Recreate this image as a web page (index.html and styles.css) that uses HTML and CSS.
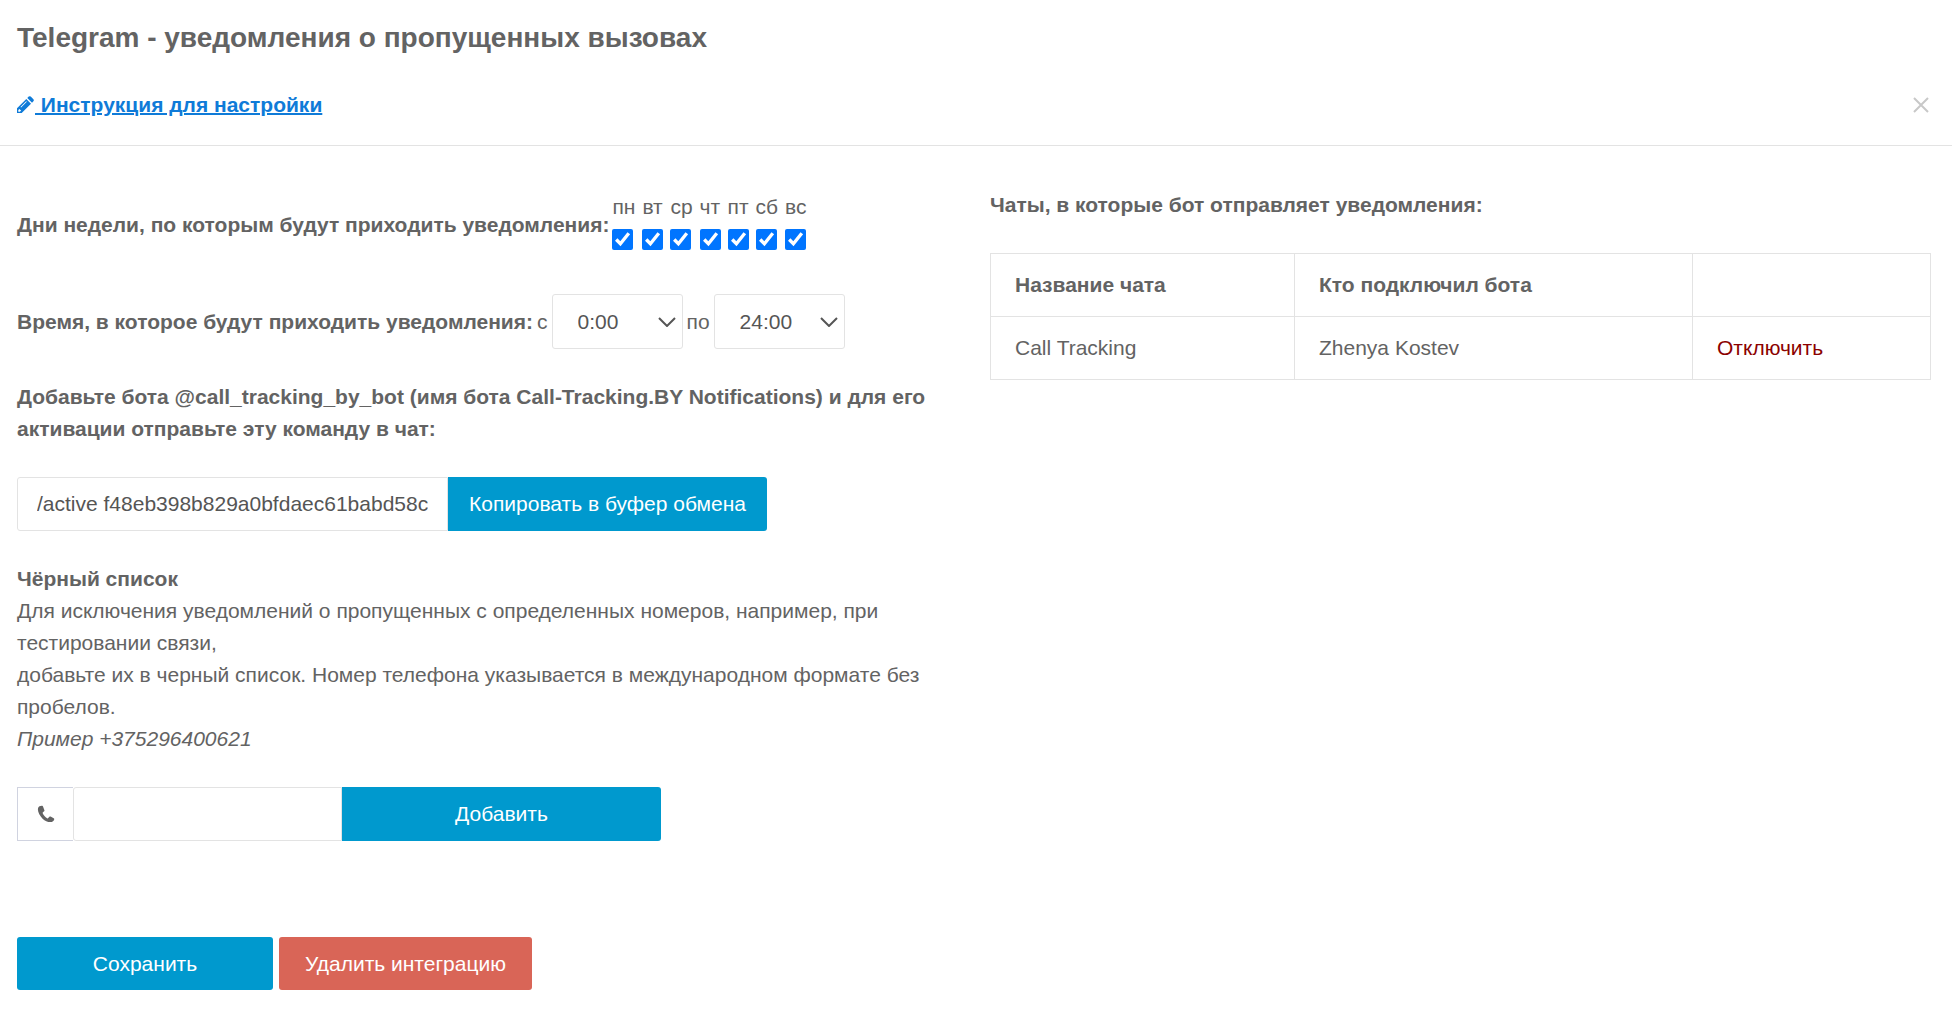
FILE: index.html
```html
<!DOCTYPE html>
<html lang="ru">
<head>
<meta charset="utf-8">
<meta name="viewport" content="width=device-width, initial-scale=1">
<title>Telegram - уведомления о пропущенных вызовах</title>
<link rel="stylesheet" href="styles.css">
</head>
<body>
<header class="header">
  <h1 class="title">Telegram - уведомления о пропущенных вызовах</h1>
  <div class="header-row">
    <a class="guide" href="#guide"><svg class="pencil" viewBox="0 0 18 18" aria-hidden="true"><path fill="currentColor" fill-rule="evenodd" d="M0 12.300 9.300 3l4.700 4.700L4.700 17H0zM1.300 14v1.700H3l1.100-1.100-1.700-1.700zM9.200 5.200 3.500 10.900l.6.6 5.700-5.700zM10.300 2l1.400-1.400q1-.9 2 0l2.700 2.700q.9 1 0 2L15 6.700z"/></svg><span class="guide-text">&nbsp;Инструкция для настройки</span></a>
    <button class="close" type="button" aria-label="Закрыть"><svg class="cross" viewBox="0 0 16 16" aria-hidden="true"><path d="M1 1l14 14M15 1 1 15" fill="none" stroke="currentColor" stroke-width="2"/></svg></button>
  </div>
</header>
<main class="columns">
  <form class="settings">
    <div class="days-row">
      <strong>Дни недели, по которым будут приходить уведомления:</strong>
      <div class="days">
        <label class="day">пн<input type="checkbox" checked></label>
        <label class="day">вт<input type="checkbox" checked></label>
        <label class="day">ср<input type="checkbox" checked></label>
        <label class="day">чт<input type="checkbox" checked></label>
        <label class="day">пт<input type="checkbox" checked></label>
        <label class="day">сб<input type="checkbox" checked></label>
        <label class="day">вс<input type="checkbox" checked></label>
      </div>
    </div>
    <div class="time-row">
      <strong>Время, в которое будут приходить уведомления:</strong>
      <label for="from">с</label>
      <span class="picker"><select id="from" class="select"><option>0:00</option></select><svg class="chevron" viewBox="0 0 18 10" aria-hidden="true"><path d="M1 1l8 8 8-8" fill="none" stroke="currentColor" stroke-width="2"/></svg></span>
      <label for="to">по</label>
      <span class="picker"><select id="to" class="select"><option>24:00</option></select><svg class="chevron" viewBox="0 0 18 10" aria-hidden="true"><path d="M1 1l8 8 8-8" fill="none" stroke="currentColor" stroke-width="2"/></svg></span>
    </div>
    <label class="command-label" for="command">Добавьте бота @call_tracking_by_bot (имя бота Call-Tracking.BY Notifications) и для его активации отправьте эту команду в чат:</label>
    <div class="group">
      <input class="field command" id="command" type="text" readonly value="/active f48eb398b829a0bfdaec61babd58c2">
      <button class="button attached" type="button">Копировать в буфер обмена</button>
    </div>
    <section class="blacklist">
      <label for="phone"><strong>Чёрный список</strong></label>
      <p class="text">Для исключения уведомлений о пропущенных с определенных номеров, например, при тестировании связи,<br>добавьте их в черный список. Номер телефона указывается в международном формате без пробелов.<br><em>Пример +375296400621</em></p>
    </section>
    <div class="group">
      <span class="addon"><svg class="phone" viewBox="0 0 18 18" aria-hidden="true"><path fill="currentColor" d="M3.500 1C2 1.300.9 2.300.9 4.600c0 3 2.200 6.700 4.700 9.100 2.400 2.300 5.300 3.500 7.900 3.400 2 0 3.400-1.100 3.700-2.600.1-.6 0-.9-.5-1.200l-3.100-1.700c-.5-.3-.9-.2-1.200.2l-1.200 1.300c-.3.300-.7.4-1.100.1-2-1.200-3.500-2.900-4.400-4.900-.2-.4-.1-.8.3-1.100l1.100-.9c.4-.3.500-.6.300-1.100L6.100 1.700C5.800 1 5.500.8 4.900.8z"/></svg></span>
      <input class="field number" id="phone" type="tel">
      <button class="button attached" type="button">Добавить</button>
    </div>
    <div class="actions">
      <button class="button save" type="submit">Сохранить</button>
      <button class="button danger" type="button">Удалить интеграцию</button>
    </div>
  </form>
  <section class="chats">
    <h2 class="subtitle">Чаты, в которые бот отправляет уведомления:</h2>
    <table class="table">
      <thead><tr><th class="col-chat">Название чата</th><th class="col-user">Кто подключил бота</th><th></th></tr></thead>
      <tbody><tr><td>Call Tracking</td><td>Zhenya Kostev</td><td><a class="disconnect" href="#disconnect">Отключить</a></td></tr></tbody>
    </table>
  </section>
</main>
</body>
</html>
```
FILE: styles.css
```css
* { box-sizing: border-box; }
body {
  margin: 0;
  background: #fff;
  color: #636363;
  font: 21px/32px "Helvetica Neue", "Liberation Sans", Arial, sans-serif;
}
button, input, select { margin: 0; font: inherit; }
.header { padding: 20px 18px 24px 17px; border-bottom: 1px solid #e3e3e3; }
.title { margin: 0 0 33px; font-size: 28px; line-height: 36px; }
.header-row { display: flex; align-items: center; justify-content: space-between; }
.guide { display: flex; align-items: center; color: #0f7bd8; font-weight: bold; text-decoration: none; }
.guide-text { text-decoration: underline; text-decoration-thickness: 2px; }
.pencil { width: 18px; height: 18px; }
.close { display: flex; padding: 5px; border: 0; background: none; color: #c8c8c8; }
.cross { width: 16px; height: 16px; }
.columns {
  display: grid;
  grid-template-columns: 1fr 1fr;
  gap: 32px;
  padding: 43px 21px 40px 17px;
}
.days-row { display: flex; align-items: center; gap: 3px; margin-top: 2px; }
.days { display: flex; gap: 7px; }
.day { display: flex; flex-direction: column; gap: 6px; padding-bottom: 8px; }
.day input { width: 21px; height: 21px; accent-color: #0075ff; }
.time-row { display: flex; align-items: center; gap: 4px; margin: 36px 0 32px; }
.picker { display: flex; align-items: center; position: relative; }
.select {
  width: 131px;
  height: 55px;
  padding: 0 25px;
  border: 1px solid #e3e3e3;
  border-radius: 3px;
  background: #fff;
  color: #555;
  appearance: none;
}
.chevron { position: absolute; right: 7px; width: 18px; height: 10px; color: #555; pointer-events: none; }
.command-label { display: block; margin-bottom: 32px; font-weight: bold; }
.group { display: flex; }
.field {
  height: 54px;
  padding: 0 19px;
  border: 1px solid #e3e3e3;
  border-radius: 3px 0 0 3px;
  background: #fff;
  color: #555;
}
.command { width: 431px; }
.number { width: 269px; }
.addon {
  display: flex;
  align-items: center;
  justify-content: center;
  width: 56px;
  border: 1px solid #d0d3e0;
  border-right: 0;
}
.phone { width: 18px; height: 18px; }
.button { height: 53px; padding: 0; border: 0; border-radius: 3px; background: #0099ce; color: #fff; }
.attached { width: 319px; height: 54px; border-radius: 0 3px 3px 0; }
.blacklist { margin: 32px 0; }
.text { margin: 0; }
.actions { display: flex; gap: 6px; margin-top: 96px; }
.save { width: 256px; }
.danger { width: 253px; background: #d96557; }
.subtitle { margin: 0 0 32px; font-size: 21px; line-height: 32px; }
.table { width: 100%; border-collapse: collapse; table-layout: fixed; }
.table th, .table td { height: 63px; padding: 0 24px; border: 1px solid #e3e3e3; text-align: left; }
.col-chat { width: 304px; }
.col-user { width: 398px; }
.disconnect { color: #8b0000; text-decoration: none; }
```
